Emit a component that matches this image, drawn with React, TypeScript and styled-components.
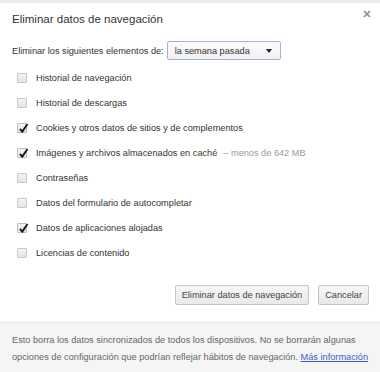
import styled, { createGlobalStyle } from "styled-components";

const GlobalStyle = createGlobalStyle`
  html, body {
    margin: 0;
    padding: 0;
    background: #ffffff;
  }
  body {
    font-family: "Liberation Sans", Arial, sans-serif;
    color: #333333;
  }
`;

const StyledDialog = styled.div`
  width: 380px;
  height: 372px;
  background: #ffffff;
  border-top: 3px solid #ececec;
  box-sizing: border-box;
  display: flex;
  flex-direction: column;
`;

// *** header -> start ***

const StyledHeader = styled.div`
  display: flex;
  justify-content: space-between;
  align-items: flex-start;
  padding: 0 8px 0 12px;
  height: 28px;
`;

const StyledTitle = styled.div`
  font-size: 11.5px;
  color: #333333;
  margin-top: 10px;
`;

const StyledClose = styled.div`
  width: 10px;
  height: 10px;
  margin-top: 6px;
  display: flex;
  align-items: center;
  justify-content: center;
`;

// *** header -> end ***

const StyledBody = styled.div`
  flex-grow: 1;
  padding: 0 12px;
  display: flex;
  flex-direction: column;
`;

const StyledSelectRow = styled.div`
  display: flex;
  align-items: center;
  gap: 3px;
  margin-top: 10px;
  font-size: 9.2px;
`;

const StyledSelect = styled.div`
  width: 114px;
  height: 19px;
  box-sizing: border-box;
  border: 1px solid #9fb4d6;
  border-radius: 2px;
  background: linear-gradient(#fbfbfb, #f1f1f1);
  display: flex;
  align-items: center;
  justify-content: space-between;
  padding: 0 8px 0 7px;
  font-size: 9.2px;
  color: #333333;
`;

const StyledArrow = styled.div`
  width: 0;
  height: 0;
  border-left: 3.5px solid transparent;
  border-right: 3.5px solid transparent;
  border-top: 4px solid #222222;
`;

const StyledList = styled.div`
  display: flex;
  flex-direction: column;
  margin-top: 5px;
  padding-left: 5px;
`;

const StyledItem = styled.div`
  display: flex;
  align-items: center;
  gap: 9px;
  height: 25px;
  font-size: 9.2px;
  color: #333333;
`;

const StyledCheckbox = styled.div<{ $checked: boolean }>`
  width: 10px;
  height: 10px;
  box-sizing: border-box;
  border: 1px solid ${(props) => (props.$checked ? "#bcbcbc" : "#c8c8c8")};
  border-radius: 1px;
  background: linear-gradient(#f4f4f4, #e4e4e4);
  position: relative;
`;

const StyledCheck = styled.svg`
  position: absolute;
  left: 0px;
  top: -2px;
`;

const StyledHint = styled.span`
  color: #9a9a9a;
  margin-left: 6px;
`;

// *** buttons -> start ***

const StyledButtons = styled.div`
  display: flex;
  justify-content: flex-end;
  gap: 9px;
  margin-top: 20px;
  margin-right: -1px;
`;

const StyledButton = styled.div`
  height: 20px;
  box-sizing: border-box;
  border: 1px solid #c4c4c4;
  border-radius: 2px;
  background: linear-gradient(#f6f6f6, #e9e9e9);
  display: flex;
  align-items: center;
  padding: 0 6px;
  font-size: 9.2px;
  color: #444444;
`;

// *** buttons -> end ***

const StyledFooter = styled.div`
  height: 50px;
  box-sizing: border-box;
  background: #f5f5f5;
  border-top: 1px solid #e8e8e8;
  padding: 9px 10px 0 12px;
  font-size: 9.2px;
  line-height: 17px;
  color: #666666;
`;

const StyledLink = styled.a`
  color: #3b5fc0;
  text-decoration: underline;
`;

type Item = {
  label: string;
  checked: boolean;
  hint?: string;
};

const items: Item[] = [
  { label: "Historial de navegación", checked: false },
  { label: "Historial de descargas", checked: false },
  { label: "Cookies y otros datos de sitios y de complementos", checked: true },
  { label: "Imágenes y archivos almacenados en caché", checked: true, hint: "–  menos de 642 MB" },
  { label: "Contraseñas", checked: false },
  { label: "Datos del formulario de autocompletar", checked: false },
  { label: "Datos de aplicaciones alojadas", checked: true },
  { label: "Licencias de contenido", checked: false },
];

const App = () => {
  return (
    <StyledDialog>
      <GlobalStyle />
      <StyledHeader>
        <StyledTitle>Eliminar datos de navegación</StyledTitle>
        <StyledClose>
          <svg width="8" height="8" viewBox="0 0 8 8">
            <path d="M1 1 L7 7 M7 1 L1 7" stroke="#8a8a8a" strokeWidth="1.6" />
          </svg>
        </StyledClose>
      </StyledHeader>
      <StyledBody>
        <StyledSelectRow>
          <span>Eliminar los siguientes elementos de:</span>
          <StyledSelect>
            <span>la semana pasada</span>
            <StyledArrow />
          </StyledSelect>
        </StyledSelectRow>
        <StyledList>
          {items.map((item) => (
            <StyledItem key={item.label}>
              <StyledCheckbox $checked={item.checked}>
                {item.checked && (
                  <StyledCheck width="11" height="12" viewBox="0 0 11 12">
                    <path d="M2 7 L4.3 9.6 L9.5 2" stroke="#1a1a1a" strokeWidth="1.9" fill="none" />
                  </StyledCheck>
                )}
              </StyledCheckbox>
              <span>
                {item.label}
                {item.hint && <StyledHint>{item.hint}</StyledHint>}
              </span>
            </StyledItem>
          ))}
        </StyledList>
        <StyledButtons>
          <StyledButton>Eliminar datos de navegación</StyledButton>
          <StyledButton>Cancelar</StyledButton>
        </StyledButtons>
      </StyledBody>
      <StyledFooter>
        Esto borra los datos sincronizados de todos los dispositivos. No se borrarán algunas opciones de configuración que podrían reflejar hábitos de navegación.{" "}
        <StyledLink href="#">Más información</StyledLink>
      </StyledFooter>
    </StyledDialog>
  );
};

export default App;
